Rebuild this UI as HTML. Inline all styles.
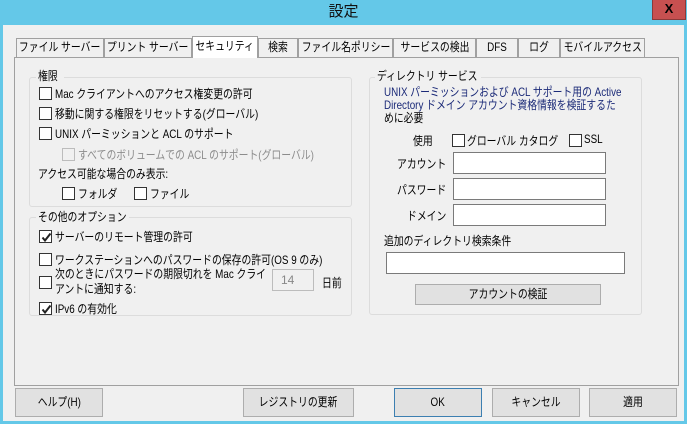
<!DOCTYPE html>
<html><head><meta charset="utf-8"><style>
*{box-sizing:border-box;margin:0;padding:0}
body{width:687px;height:424px;background:#64c8e8;font-family:"Liberation Sans","Noto Sans CJK JP",sans-serif;font-size:12px;color:#000;position:relative;overflow:hidden}
.a{position:absolute;white-space:nowrap}
.s{display:inline-block;transform:scaleX(.82);transform-origin:0 0}
.c{display:inline-block;flex:none;transform:scaleX(.82);transform-origin:50% 0}
.title{left:0;top:0;width:687px;height:26px;text-align:center;line-height:24px;font-size:15px;color:#111}
.close{left:652px;top:0;width:34px;height:20px;background:#c75050;border:1px solid #8a3a3a;border-top:none;color:#000;font-weight:bold;text-align:center;line-height:18px;font-size:13px}
.win{left:3px;top:25px;width:681px;height:396px;background:#f0f0f0}
.tab{top:38px;height:19px;border:1px solid #a0a0a0;border-bottom:none;background:#f0f0f0;display:flex;justify-content:center;line-height:17px;font-size:12px}
.tab.sel{top:36px;height:22px;background:#fff;z-index:3;line-height:19px}
.panel{left:14px;top:57px;width:665px;height:329px;border:1px solid #a0a0a0;background:#f0f0f0}
.grp{border:1px solid #dcdcdc;border-radius:3px}
.lg{background:#f0f0f0;padding:0 2px;line-height:14px;overflow:hidden}
.cb{width:13px;height:13px;border:1px solid #333;background:#fff}
.cb.dis{border-color:#bcbcbc;background:#f0f0f0}
.cb svg{position:absolute;left:1px;top:1px}
.inp{background:#fff;border:1px solid #7a7a7a}
.btn{border:1px solid #adadad;background:#e1e1e1;display:flex;justify-content:center;font-size:12px}
</style></head><body>
<div class="a title">設定</div>
<div class="a close">X</div>
<div class="a win"></div>
<div class="a panel"></div>
<div class="a tab" style="left:16px;width:88px"><span class="c">ファイル サーバー</span></div>
<div class="a tab" style="left:104px;width:88px"><span class="c">プリント サーバー</span></div>
<div class="a tab sel" style="left:192px;width:66px"><span class="c">セキュリティ</span></div>
<div class="a tab" style="left:258px;width:40px"><span class="c">検索</span></div>
<div class="a tab" style="left:298px;width:95px"><span class="c">ファイル名ポリシー</span></div>
<div class="a tab" style="left:393px;width:83px"><span class="c">サービスの検出</span></div>
<div class="a tab" style="left:476px;width:42px"><span class="c">DFS</span></div>
<div class="a tab" style="left:518px;width:42px"><span class="c">ログ</span></div>
<div class="a tab" style="left:560px;width:85px"><span class="c">モバイルアクセス</span></div>

<div class="a grp" style="left:29px;top:77px;width:323px;height:130px"></div>
<div class="a lg" style="left:36px;top:69px;width:28px"><span class="s">権限</span></div>
<div class="a cb" style="left:39px;top:87px"></div><div class="a" style="left:55px;top:85px"><span class="s">Mac クライアントへのアクセス権変更の許可</span></div>
<div class="a cb" style="left:39px;top:107px"></div><div class="a" style="left:55px;top:105px"><span class="s">移動に関する権限をリセットする(グローバル)</span></div>
<div class="a cb" style="left:39px;top:127px"></div><div class="a" style="left:55px;top:125px"><span class="s">UNIX パーミッションと ACL のサポート</span></div>
<div class="a cb dis" style="left:62px;top:148px"></div><div class="a" style="left:78px;top:146px;color:#8c8c8c"><span class="s">すべてのボリュームでの ACL のサポート(グローバル)</span></div>
<div class="a" style="left:38px;top:165px"><span class="s">アクセス可能な場合のみ表示:</span></div>
<div class="a cb" style="left:62px;top:187px"></div><div class="a" style="left:78px;top:185px"><span class="s">フォルダ</span></div>
<div class="a cb" style="left:134px;top:187px"></div><div class="a" style="left:150px;top:185px"><span class="s">ファイル</span></div>

<div class="a grp" style="left:29px;top:217px;width:323px;height:99px"></div>
<div class="a lg" style="left:36px;top:210px;width:93px"><span class="s">その他のオプション</span></div>
<div class="a cb" style="left:39px;top:230px"><svg width="11" height="11"><path d="M1.5 5.5 L4 8.5 L9.5 1.5" stroke="#222" stroke-width="2" fill="none"/></svg></div><div class="a" style="left:55px;top:228px"><span class="s">サーバーのリモート管理の許可</span></div>
<div class="a cb" style="left:39px;top:253px"></div><div class="a" style="left:55px;top:251px"><span class="s">ワークステーションへのパスワードの保存の許可(OS 9 のみ)</span></div>
<div class="a cb" style="left:39px;top:276px"></div><div class="a" style="left:55px;top:267px;line-height:15px"><span class="s">次のときにパスワードの期限切れを Mac クライ<br>アントに通知する:</span></div>
<div class="a" style="left:272px;top:269px;width:42px;height:22px;border:1px solid #bcbcbc;background:#f0f0f0;color:#888;padding-left:8px;line-height:20px">14</div>
<div class="a" style="left:322px;top:274px"><span class="s">日前</span></div>
<div class="a cb" style="left:39px;top:302px"><svg width="11" height="11"><path d="M1.5 5.5 L4 8.5 L9.5 1.5" stroke="#222" stroke-width="2" fill="none"/></svg></div><div class="a" style="left:55px;top:300px"><span class="s">IPv6 の有効化</span></div>

<div class="a grp" style="left:369px;top:77px;width:273px;height:238px"></div>
<div class="a lg" style="left:375px;top:69px;width:106px"><span class="s">ディレクトリ サービス</span></div>
<div class="a" style="left:384px;top:86px;line-height:13px;color:#1b2a78"><span class="s">UNIX パーミッションおよび ACL サポート用の Active<br>Directory ドメイン アカウント資格情報を検証するた<br><span style="color:#000">めに必要</span></span></div>
<div class="a" style="left:413px;top:132px"><span class="s">使用</span></div>
<div class="a cb" style="left:452px;top:134px"></div><div class="a" style="left:467px;top:132px"><span class="s">グローバル カタログ</span></div>
<div class="a cb" style="left:569px;top:134px"></div><div class="a" style="left:584px;top:132px"><span class="s">SSL</span></div>
<div class="a" style="left:397px;top:155px"><span class="s">アカウント</span></div>
<div class="a inp" style="left:453px;top:152px;width:153px;height:22px"></div>
<div class="a" style="left:397px;top:181px"><span class="s">パスワード</span></div>
<div class="a inp" style="left:453px;top:178px;width:153px;height:22px"></div>
<div class="a" style="left:407px;top:207px"><span class="s">ドメイン</span></div>
<div class="a inp" style="left:453px;top:204px;width:153px;height:22px"></div>
<div class="a" style="left:384px;top:232px"><span class="s">追加のディレクトリ検索条件</span></div>
<div class="a inp" style="left:386px;top:252px;width:239px;height:22px"></div>
<div class="a btn" style="left:415px;top:284px;width:186px;height:21px;line-height:19px"><span class="c">アカウントの検証</span></div>

<div class="a btn" style="left:15px;top:388px;width:88px;height:29px;line-height:27px"><span class="c">ヘルプ(H)</span></div>
<div class="a btn" style="left:243px;top:388px;width:111px;height:29px;line-height:27px"><span class="c">レジストリの更新</span></div>
<div class="a btn" style="left:394px;top:388px;width:88px;height:29px;line-height:27px;border-color:#3c7fb1"><span class="c">OK</span></div>
<div class="a btn" style="left:492px;top:388px;width:88px;height:29px;line-height:27px"><span class="c">キャンセル</span></div>
<div class="a btn" style="left:589px;top:388px;width:88px;height:29px;line-height:27px"><span class="c">適用</span></div>
</body></html>
